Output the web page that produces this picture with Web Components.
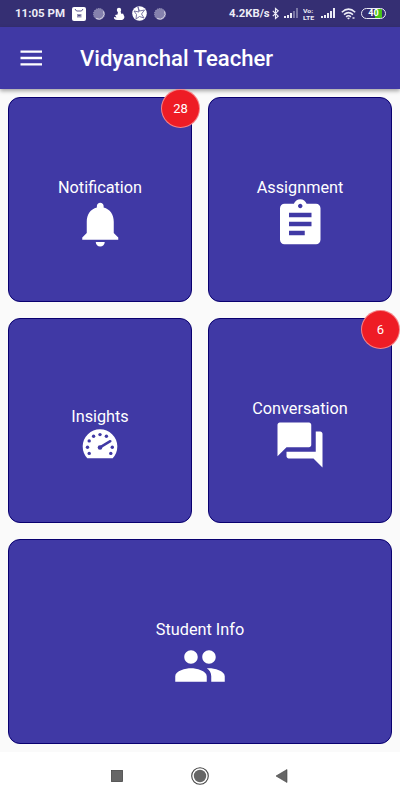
<!DOCTYPE html>
<html lang="en">
<head>
<meta charset="utf-8">
<title>Vidyanchal Teacher</title>
<style>
  body {
    margin: 0;
    font-family: Roboto, "Liberation Sans", sans-serif;
    background: #fafafa;
  }
</style>
</head>
<body>
<teacher-app></teacher-app>
<script>
const ICONS = {
  bell: `<svg width="54.5" height="54" viewBox="0 0 24 24"><path d="M12 22c1.1 0 2-.9 2-2h-4c0 1.1.89 2 2 2zm6-6v-5c0-3.07-1.64-5.64-4.5-6.32V4c0-.83-.67-1.5-1.5-1.5s-1.5.67-1.5 1.5v.68C7.63 5.36 6 7.92 6 11v5l-2 2v1h16v-1l-2-2z"/></svg>`,
  assignment: `<svg width="54.5" height="54" viewBox="0 0 24 24"><path d="M19 3h-4.18C14.4 1.84 13.3 1 12 1c-1.3 0-2.4.84-2.82 2H5c-1.1 0-2 .9-2 2v14c0 1.1.9 2 2 2h14c1.1 0 2-.9 2-2V5c0-1.1-.9-2-2-2zm-7 0c.55 0 1 .45 1 1s-.45 1-1 1-1-.45-1-1 .45-1 1-1zm2 14H7v-2h7v2zm3-4H7v-2h10v2zm0-4H7V7h10v2z"/></svg>`,
  gauge: `<svg width="36" height="36" viewBox="0 0 36 36" style="margin-bottom:2px"><path d="M5.300 32.300A17.300 17.300 0 1 1 30.700 32.300Z"/><g fill="#4039a5"><circle cx="18" cy="8.600" r="1.700"/><circle cx="11.600" cy="10.300" r="1.700"/><circle cx="24.400" cy="10.300" r="1.700"/><circle cx="7.200" cy="14.900" r="1.700"/><circle cx="5.500" cy="21.200" r="1.700"/><circle cx="30.300" cy="21.200" r="1.700"/><circle cx="7.200" cy="27.400" r="1.700"/><circle cx="28.800" cy="27.400" r="1.700"/><circle cx="18" cy="21.500" r="2.300"/></g><path d="M18 21.300L28.300 15.200" stroke="#4039a5" stroke-width="2.500" stroke-linecap="round"/></svg>`,
  forum: `<svg width="54" height="54" viewBox="0 0 24 24"><path d="M21 6h-2v9H6v2c0 .55.45 1 1 1h11l4 4V7c0-.55-.45-1-1-1zm-4 6V3c0-.55-.45-1-1-1H3c-.55 0-1 .45-1 1v14l4-4h10c.55 0 1-.45 1-1z"/></svg>`,
  people: `<svg width="54" height="54" viewBox="0 0 24 24"><path d="M16 11c1.66 0 2.99-1.34 2.99-3S17.66 5 16 5c-1.66 0-3 1.34-3 3s1.34 3 3 3zm-8 0c1.66 0 2.99-1.34 2.99-3S9.66 5 8 5C6.34 5 5 6.34 5 8s1.34 3 3 3zm0 2c-2.33 0-7 1.17-7 3.5V19h14v-2.5c0-2.33-4.67-3.5-7-3.5zm8 0c-.29 0-.62.02-.97.05 1.16.84 1.97 1.97 1.97 3.45V19h6v-2.5c0-2.33-4.67-3.5-7-3.5z"/></svg>`
};

class StatusBar extends HTMLElement {
  constructor() {
    super();
    this.attachShadow({ mode: 'open' });
  }

  connectedCallback() {
    this.shadowRoot.innerHTML = `
    <style>
      :host {
        display: flex;
        justify-content: space-between;
        align-items: center;
        box-sizing: border-box;
        height: 27px;
        padding: 0 14px 0 15px;
        background: #352f73;
        color: #ececf6;
        font-size: 11.3px;
        font-weight: 700;
        line-height: 27px;
      }
      .side { display: flex; align-items: center; height: 27px; }
      svg { display: block; flex: none; }
      .time { width: 50.5px; white-space: nowrap; font-size: 11.5px; }
      .notices { gap: 6.2px; }
      .rate { white-space: nowrap; width: 42px; }
      .volte { width: 13px; margin: 0 5px 0 4px; font-size: 6px; white-space: nowrap; }
      .volte span { display: block; height: 7px; line-height: 7px; transform: scaleX(1.15); transform-origin: left; }
      .battery {
        box-sizing: border-box;
        width: 25px;
        height: 11px;
        margin-left: 5px;
        border: 1px solid #ececf6;
        border-radius: 6px;
        font-size: 9px;
        line-height: 9px;
        text-align: center;
        color: #fff;
        background: linear-gradient(90deg, transparent 58%, #46c317 58% 92%, transparent 92%) content-box;
        padding: 0 1px;
      }
    </style>
    <div class="side notices">
      <span class="time">11:05 PM</span>
      <svg width="14" height="14"><rect width="14" height="14" rx="2" fill="#fff"/><path d="M3 2l1.500 2h5L11 2" fill="none" stroke="#352f73" stroke-width=".8"/><rect x="5" y="7" width="4.500" height="3.500" fill="#9b98b9"/><path d="M6 8.500h2.500" stroke="#352f73" stroke-width=".7"/></svg>
      <svg width="14" height="14"><circle cx="7" cy="7" r="5.500" fill="#8581ad"/><path d="M4 11.300a5.300 5.300 0 0 0 7.500-7" fill="none" stroke="#dddbea" stroke-width="1"/><circle cx="7" cy="7" r="5.500" fill="none" stroke="#a6a3c5" stroke-dasharray="1 1"/></svg>
      <svg width="14" height="14"><circle cx="7" cy="3" r="2.200" fill="#fff"/><path d="M6 4.500h2.500L9.500 7l1.500-.5L12 8.700c1.200 2-.6 4.300-3 4.300H5.500c-3 0-4-1.500-3.500-3l2.500.5L3 8l2.500-.5z" fill="#fff"/></svg>
      <svg width="15" height="15"><circle cx="7.500" cy="7.500" r="7.300" fill="#fff"/><path d="M6 1l1.500 4 5-1-3 4 2.500 4-4.500-1.500L4 13l.5-4.500L2 5l5 1z" fill="none" stroke="#6b679a" stroke-width=".9"/></svg>
      <svg width="14" height="14"><circle cx="7" cy="7" r="5.500" fill="#8581ad"/><path d="M4 11.300a5.300 5.300 0 0 0 7.500-7" fill="none" stroke="#dddbea" stroke-width="1"/><circle cx="7" cy="7" r="5.500" fill="none" stroke="#a6a3c5" stroke-dasharray="1 1"/></svg>
    </div>
    <div class="side">
      <span class="rate">4.2KB/s</span>
      <svg width="9" height="13" viewBox="0 0 10 13"><path d="M2 3.500l6 6-3 2.500V1l3 2.500-6 6" fill="none" stroke="#ececf6" stroke-width="1.300"/></svg>
      <svg style="margin-left:4px" width="15" height="11" fill="#ececf6"><path d="M0 8h2v2H0zM3 7h2v3H3zM6 5h2v5H6z"/><path d="M9 3h2v7H9zM12 0h2v10h-2z" opacity=".38"/></svg>
      <div class="volte"><span>Vo:</span><span>LTE</span></div>
      <svg width="15" height="11" fill="#ececf6"><path d="M0 8h2v2H0zM3 7h2v3H3zM6 5h2v5H6zM9 3h2v7H9zM12 0h2v10h-2z"/></svg>
      <svg style="margin-left:5px" width="15" height="12" viewBox="0 0 15 12"><g fill="none" stroke="#ececf6" stroke-width="1.500"><path d="M.8 4.200Q7.500-2 14.200 4.200"/><path d="M3 6.600Q7.500 2.600 12 6.600"/><path d="M5.100 8.800Q7.500 6.800 9.900 8.800"/></g><path d="M6 10q1.500-1.200 3 0l-1.500 1.500z" fill="#ececf6"/><path d="M11.500 9h2v2h-2z" fill="#b7b4d0"/></svg>
      <div class="battery">40</div>
    </div>`;
  }
}
customElements.define('status-bar', StatusBar);

class AppHeader extends HTMLElement {
  constructor() {
    super();
    this.attachShadow({ mode: 'open' });
  }

  connectedCallback() {
    this.shadowRoot.innerHTML = `
    <style>
      :host {
        display: flex;
        align-items: center;
        box-sizing: border-box;
        height: 62px;
        padding: 0 20px;
        gap: 38px;
        background: #4039a5;
        color: #fff;
        box-shadow: 0 2px 4px rgba(0, 0, 0, .35);
      }
      svg { display: block; margin-bottom: 1px; }
      h1 { margin: 0; font-size: 22.1px; font-weight: 500; white-space: nowrap; }
    </style>
    <svg width="22" height="16"><path d="M.5 1.700h21.500M.5 8h21.500M.5 14.300h21.500" stroke="#fff" stroke-width="2.300"/></svg>
    <h1><slot></slot></h1>`;
  }
}
customElements.define('app-header', AppHeader);

class MenuCard extends HTMLElement {
  constructor() {
    super();
    this.attachShadow({ mode: 'open' });
  }

  connectedCallback() {
    const count = this.getAttribute('count');
    this.shadowRoot.innerHTML = `
    <style>
      :host {
        display: flex;
        flex-direction: column;
        align-items: center;
        justify-content: center;
        box-sizing: border-box;
        position: relative;
        padding-top: 30px;
        border: 1px solid #09006f;
        border-radius: 12px;
        background: #4039a5;
        color: #fff;
        font-size: 16.25px;
        line-height: 19px;
      }
      svg { display: block; fill: #fff; }
      .badge {
        position: absolute;
        top: -9px;
        right: -9px;
        width: 39px;
        height: 39px;
        border: 1px solid rgba(255, 255, 255, .45);
        box-sizing: border-box;
        border-radius: 50%;
        background: #ee1c25;
        font-size: 13px;
        line-height: 38px;
        text-align: center;
      }
    </style>
    <slot></slot>
    ${ICONS[this.getAttribute('icon')]}
    ${count ? `<span class="badge">${count}</span>` : ''}`;
  }
}
customElements.define('menu-card', MenuCard);

class NavBar extends HTMLElement {
  constructor() {
    super();
    this.attachShadow({ mode: 'open' });
  }

  connectedCallback() {
    this.shadowRoot.innerHTML = `
    <style>
      :host {
        display: flex;
        align-items: center;
        justify-content: center;
        gap: 62px;
        height: 48px;
        background: #fff;
      }
      svg { display: block; }
    </style>
    <svg width="20" height="20"><rect x="3.500" y="4.500" width="11" height="11" fill="#666" stroke="#444" stroke-width=".8"/></svg>
    <svg width="20" height="20"><circle cx="10" cy="10" r="8.300" fill="none" stroke="#444" stroke-width="1.100"/><circle cx="10" cy="10" r="6.200" fill="#666"/></svg>
    <svg width="20" height="20"><path d="M4 10l11-6.500v13z" fill="#666" stroke="#444" stroke-width=".6"/></svg>`;
  }
}
customElements.define('nav-bar', NavBar);

class TeacherApp extends HTMLElement {
  constructor() {
    super();
    this.attachShadow({ mode: 'open' });
  }

  connectedCallback() {
    this.shadowRoot.innerHTML = `
    <style>
      :host {
        display: flex;
        flex-direction: column;
        width: 400px;
        height: 800px;
        overflow: hidden;
      }
      main {
        flex: 1;
        display: grid;
        grid-template-columns: 1fr 1fr;
        grid-template-rows: repeat(3, 1fr);
        gap: 16px;
        padding: 8px;
      }
      .wide { grid-column: span 2; }
    </style>
    <status-bar></status-bar>
    <app-header>Vidyanchal Teacher</app-header>
    <main>
      <menu-card icon="bell" count="28">Notification</menu-card>
      <menu-card icon="assignment">Assignment</menu-card>
      <menu-card icon="gauge">Insights</menu-card>
      <menu-card icon="forum" count="6">Conversation</menu-card>
      <menu-card icon="people" class="wide">Student Info</menu-card>
    </main>
    <nav-bar></nav-bar>`;
  }
}
customElements.define('teacher-app', TeacherApp);
</script>
</body>
</html>
